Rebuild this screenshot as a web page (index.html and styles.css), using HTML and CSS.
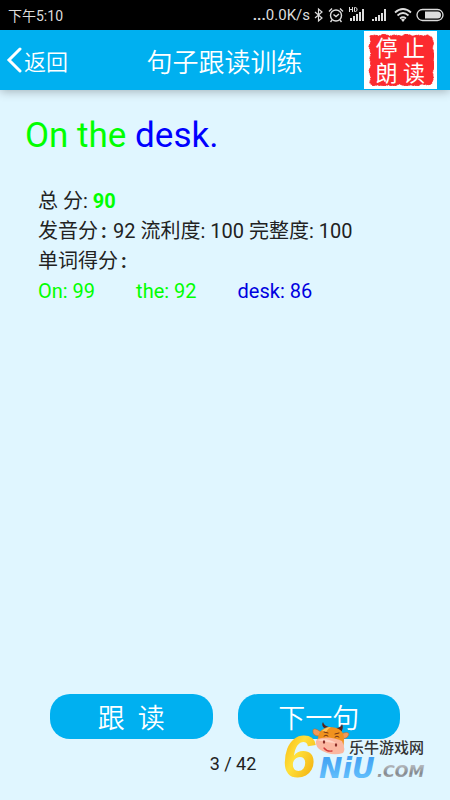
FILE: index.html
```html
<!DOCTYPE html>
<html lang="zh-CN">
<head>
  <meta charset="UTF-8" />
  <meta name="viewport" content="width=device-width, initial-scale=1.0"/>
  <title>句子跟读训练</title>
  <link rel="stylesheet" href="styles.css">
</head>
<body>
  <div class="status-bar">
    <span>下午5:10</span>
    <div class="status-right">
      <span class="speed"><b>...</b>0.0K/s</span>
      <svg width="10" height="16" viewBox="0 0 10 16"><path d="M1 5l7 6-3.500 3V2L8 5l-7 6" fill="none" stroke="#ddd" stroke-width="1.200"/></svg>
      <svg width="16" height="16" viewBox="0 0 16 16" fill="none" stroke="#ddd" stroke-width="1.400"><circle cx="8" cy="8.500" r="5.500"/><path d="M5.500 7.500L8 9.500l3-2.500M1 4.500l3-3M15 4.500l-3-3M4 13l-1.500 2M12 13l1.500 2"/></svg>
      <svg width="19" height="16" viewBox="0 0 19 16"><g fill="none" stroke="#ddd" stroke-width="1"><path d="M1.500 0v5M4.500 0v5M1.500 2.500h3M6.500 .5v4h1l1.500-1v-2l-1.500-1z"/></g><path d="M2 14v-3h2v3zM5 14v-5h2v5zM8 14V7h2v7zM11 14V5h2v9zM14 14V2h2v12z" fill="#ddd"/></svg>
      <svg width="19" height="16" viewBox="0 0 19 16"><path d="M1 14v-2h2v2zM4 14v-4h2v4zM7 14V8h2v6zM10 14V6h2v8zM13 14V2h2v12z" fill="#ddd"/></svg>
      <svg width="18" height="16" viewBox="0 0 18 16"><path d="M1 5.500q8-7 16 0M3.500 8.500q5.500-5 11 0M6 11.500q3-2.500 6 0" fill="none" stroke="#ddd" stroke-width="1.700"/><path d="M7 12.500q2-1.500 4 0L9 15z" fill="#ddd"/></svg>
      <svg width="28" height="14" viewBox="0 0 28 14"><rect x="1" y="1.500" width="26" height="11" rx="5.500" fill="none" stroke="#ddd" stroke-width="1.300"/><path d="M9 3.500h12.500a3.500 3.500 0 0 1 0 7H9z" fill="#ddd"/></svg>
    </div>
  </div>

  <header class="header">
    <button class="back-btn">
      <svg width="16" height="26" viewBox="0 0 16 26"><path d="M14 2L3 13l11 11" fill="none" stroke="#fff" stroke-width="3" stroke-linecap="round"/></svg>返回
    </button>
    <h1>句子跟读训练</h1>
    <button class="stop-btn">
      <svg class="stamp" viewBox="0 0 70 50" preserveAspectRatio="none"><path d="M3 2l5-1 4 1 6-2 5 2 6-1 7 1 5-2 6 2 6-1 5 1 5-1 4 2 2 5-1 6 2 6-1 5 1 6-2 6 1 5-2 6-4 1-6-1-5 2-6-1-7 1-5-2-6 2-6-1-5 1-6-1-5 1-3-3 1-6-2-5 2-6-1-6 1-6-2-6 2-5-1-5z" fill="#fc2b2f" stroke="#fc2b2f" stroke-width="1" stroke-dasharray="3 1 1 1"/></svg>
      <span>停 止</span>
      <span>朗 读</span>
    </button>
  </header>

  <main class="content">
    <p class="sentence"><span class="good">On the</span> <span class="fair">desk.</span></p>
    <div class="score">
      <p>总 分: <b class="good">90</b></p>
      <p>发音分<span class="colon">:</span>92 流利度: 100 完整度: 100</p>
      <p>单词得分<span class="colon">:</span></p>
      <p class="words">
        <span class="good">On: 99</span>
        <span class="good">the: 92</span>
        <span class="fair">desk: 86</span>
      </p>
    </div>
  </main>

  <footer class="footer">
    <div class="buttons">
      <button>跟&nbsp; 读</button>
      <button>下一句</button>
    </div>
    <p class="page-num">3 / 42</p>
    <svg class="watermark" width="146" height="76" viewBox="0 -4 146 76">
      <defs>
        <linearGradient id="gold" x1="0" y1="0" x2="1" y2="1">
          <stop offset="0" stop-color="#f5a800"/>
          <stop offset=".45" stop-color="#ffe03a"/>
          <stop offset="1" stop-color="#efa000"/>
        </linearGradient>
        <linearGradient id="sky" x1="0" y1="0" x2="0" y2="1">
          <stop offset="0" stop-color="#3a9af0"/>
          <stop offset="1" stop-color="#6cc8ff"/>
        </linearGradient>
        <linearGradient id="silver" x1="0" y1="0" x2="0" y2="1">
          <stop offset="0" stop-color="#c9ccd0"/>
          <stop offset=".6" stop-color="#83898f"/>
          <stop offset="1" stop-color="#bfc3c7"/>
        </linearGradient>
      </defs>
      <text class="wm-six" x="0" y="55" fill="url(#gold)">6</text>
      <text class="wm-niu" x="37" y="56" fill="url(#sky)">NiU</text>
      <text class="wm-com" x="95" y="55" fill="url(#silver)">.COM</text>
      <text class="wm-name" x="67" y="31">乐牛游戏网</text>
      <!-- cow head -->
      <path d="M39 10q-7-5-8-2-1 6 6 6zM59 12q7-3 8 0-2 6-8 4z" fill="#f19a5a" stroke="#c96a20" stroke-width=".6"/>
      <path d="M42 6q-3-3-1-6 1 4 6 5zM54 6q5 0 6-4 2 4-1 8z" fill="#5b2218"/>
      <path d="M36 20q-1-13 11-15 15 0 15 12 0 9-3 14l-18-3z" fill="#f0921e"/>
      <path d="M40 9q4-4 9-4-4 2-5 5z" fill="#ffc45d"/>
      <path d="M35 17q12-4 25 2 4 9 1 12-12 4-24-4-5-5-2-10z" fill="#fbb7a0"/>
      <path d="M35 18q9-3 19 3-12-1-19-3z" fill="#ffd5c5"/>
      <g fill="none" stroke="#6f3215" stroke-width="1" stroke-linecap="round"><path d="M42 10l4 1M53 12l4-1M42 14q2-2 4 0M53 15q2-2 4 0"/></g>
      <ellipse cx="42" cy="20" rx="1.200" ry="1.700" fill="#8b2e2a"/>
      <ellipse cx="54" cy="23" rx="1.200" ry="1.700" fill="#8b2e2a"/>
      <path d="M42 26q3 4 8 3" fill="none" stroke="#d2393a" stroke-width="1.300" stroke-linecap="round"/>
    </svg>
  </footer>
</body>
</html>
```

FILE: styles.css
```css
* { margin: 0; padding: 0; box-sizing: border-box; }
body {
  display: flex;
  flex-direction: column;
  min-height: 100vh;
  font-family: Roboto, "Noto Sans CJK SC", sans-serif;
  background-color: #e0f6ff;
  color: #222;
}
button {
  border: none;
  background: none;
  font-family: inherit;
  color: #fff;
  cursor: pointer;
}
.status-bar {
  display: flex;
  justify-content: space-between;
  align-items: center;
  height: 30px;
  padding: 0 6px 0 8px;
  background-color: #000;
  color: #ddd;
  font-size: 14px;
}
.status-right {
  display: flex;
  align-items: center;
  gap: 4px;
}
.speed { font-size: 15px; }
.header {
  display: grid;
  grid-template-columns: 1fr auto 1fr;
  align-items: center;
  height: 60px;
  padding: 0 13px 0 6px;
  background-color: #00b0f0;
  color: #fff;
  box-shadow: 0 1px 10px rgba(0,0,0,0.3);
}
.header h1 {
  padding-left: 6px;
  font-size: 26px;
  font-weight: 350;
}
.back-btn {
  display: flex;
  align-items: center;
  gap: 2px;
  font-size: 22px;
  font-weight: 350;
}
.stop-btn {
  position: relative;
  justify-self: end;
  padding: 5px 12px 3px;
  background-color: #fff;
  font-size: 22px;
  line-height: 25px;
}
.stop-btn span {
  position: relative;
  display: block;
}
.stamp {
  position: absolute;
  top: 3px;
  left: 3px;
  width: calc(100% - 6px);
  height: calc(100% - 6px);
}
.content { flex: 1; }
.sentence {
  padding: 24px 25px 0;
  font-size: 35px;
  line-height: 44px;
}
.score {
  padding: 28px 38px 0;
  font-size: 20px;
  line-height: 30px;
}
.colon {
  display: inline-block;
  width: 15px;
  padding-left: 3px;
  font-weight: bold;
}
.words {
  display: flex;
  gap: 41px;
}
.good { color: #0f0; }
.fair { color: #00f; }
.score .fair { color: #0000e0; }
.footer { position: relative; }
.buttons {
  display: flex;
  gap: 25px;
  padding: 0 50px;
}
.buttons button {
  flex: 1;
  height: 45px;
  border-radius: 20px;
  background-color: #00b0f0;
  font-size: 27px;
  font-weight: 350;
}
.page-num {
  padding: 13px 0 24px 16px;
  text-align: center;
  font-size: 18px;
  line-height: 24px;
}
.watermark {
  position: absolute;
  right: 22px;
  bottom: 6px;
}
.watermark text {
  font-family: "DejaVu Sans", sans-serif;
  font-weight: bold;
  font-style: italic;
}
.watermark .wm-six {
  font-family: "Liberation Sans", sans-serif;
  font-size: 60px;
}
.watermark .wm-niu { font-size: 28px; }
.watermark .wm-com { font-size: 16px; }
.watermark .wm-name {
  font-family: "Noto Sans CJK SC", sans-serif;
  font-size: 15px;
  font-weight: 500;
  font-style: normal;
  fill: #333;
}
```
